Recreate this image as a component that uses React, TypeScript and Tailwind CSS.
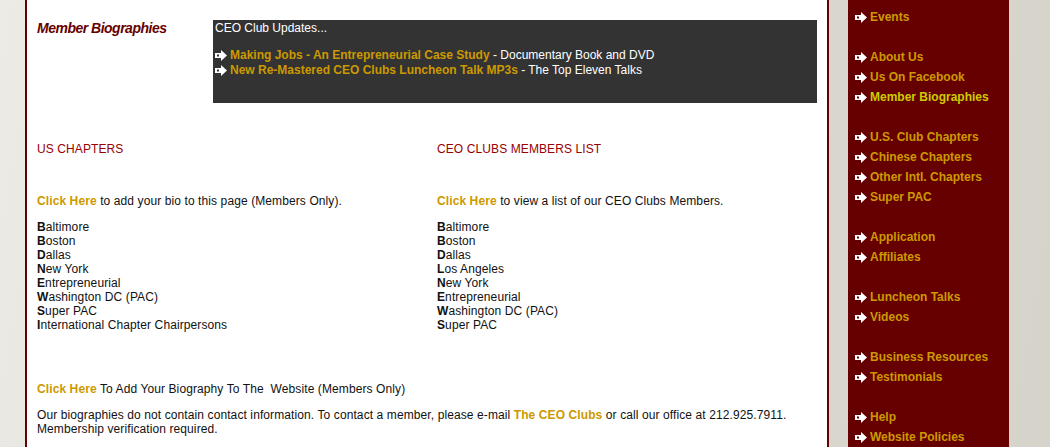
import React from 'react'

const Arrow = ({ dot = '#660000' }: { dot?: string }) => (
  <svg width="12" height="11" viewBox="0 0 12 11" className="shrink-0">
    <path d="M0 3H6V0L12 5.5L6 11V8H0Z" fill="#fff" />
    <rect x="2" y="4.5" width="2" height="2" fill={dot} />
  </svg>
)

const navGroups = [
  ['Events'],
  ['About Us', 'Us On Facebook', 'Member Biographies'],
  ['U.S. Club Chapters', 'Chinese Chapters', 'Other Intl. Chapters', 'Super PAC'],
  ['Application', 'Affiliates'],
  ['Luncheon Talks', 'Videos'],
  ['Business Resources', 'Testimonials'],
  ['Help', 'Website Policies'],
]

const usChapters = [
  'Baltimore',
  'Boston',
  'Dallas',
  'New York',
  'Entrepreneurial',
  'Washington DC (PAC)',
  'Super PAC',
  'International Chapter Chairpersons',
]

const memberList = [
  'Baltimore',
  'Boston',
  'Dallas',
  'Los Angeles',
  'New York',
  'Entrepreneurial',
  'Washington DC (PAC)',
  'Super PAC',
]

function CityList({ items }: { items: string[] }) {
  return (
    <ul className="mt-[12px] leading-[14px]">
      {items.map((c) => (
        <li key={c}>
          <b className="font-bold">{c[0]}</b>
          {c.slice(1)}
        </li>
      ))}
    </ul>
  )
}

export default function App() {
  return (
    <div className="flex h-[447px] overflow-hidden bg-[linear-gradient(100deg,#ecebe6_0%,#dedbd3_40%,#d6d3ca_100%)] font-['Liberation_Sans',Arial,sans-serif] text-[12px] text-[#111]">
      {/* main content */}
      <main className="ml-[25px] w-[804px] shrink-0 border-x-2 border-[#660000] bg-white px-[10px] pt-[20px] tracking-[0.1px]">
        <div className="flex">
          <h1 className="w-[176px] text-[14px] font-bold italic leading-[16px] tracking-[-0.5px] text-[#660000]">
            Member Biographies
          </h1>
          <div className="h-[83px] w-[604px] bg-[#333333] px-[2px] pt-px tracking-normal text-white">
            <p className="leading-[14px]">CEO Club Updates...</p>
            <div className="mt-[13px] leading-[15px]">
              <p className="flex items-center gap-[3px]">
                <Arrow dot="#333333" />
                <span>
                  <a className="font-bold text-[#cc9900]">Making Jobs - An Entrepreneurial Case Study</a> - Documentary Book and DVD
                </span>
              </p>
              <p className="flex items-center gap-[3px]">
                <Arrow dot="#333333" />
                <span>
                  <a className="font-bold text-[#cc9900]">New Re-Mastered CEO Clubs Luncheon Talk MP3s</a> - The Top Eleven Talks
                </span>
              </p>
            </div>
          </div>
        </div>

        <div className="mt-[39px] grid grid-cols-[400px_380px] leading-[14px]">
          <div>
            <h2 className="text-[#990000]">US CHAPTERS</h2>
            <p className="mt-[38px]">
              <a className="font-bold text-[#cc9900]">Click Here</a> to add your bio to this page (Members Only).
            </p>
            <CityList items={usChapters} />
          </div>
          <div>
            <h2 className="text-[#990000]">CEO CLUBS MEMBERS LIST</h2>
            <p className="mt-[38px]">
              <a className="font-bold text-[#cc9900]">Click Here</a> to view a list of our CEO Clubs Members.
            </p>
            <CityList items={memberList} />
          </div>
        </div>

        <p className="mt-[50px] leading-[14px]">
          <a className="font-bold text-[#cc9900]">Click Here</a> To Add Your Biography To The&nbsp; Website (Members Only)
        </p>
        <p className="mt-[12px] leading-[14px]">
          Our biographies do not contain contact information. To contact a member, please e-mail{' '}
          <a className="font-bold text-[#cc9900]">The CEO Clubs</a> or call our office at 212.925.7911.
          <br />
          Membership verification required.
        </p>
      </main>

      {/* sidebar */}
      <nav className="ml-[19px] w-[161px] shrink-0 bg-[#660000] pl-[7px] pt-[7px]">
        {navGroups.map((group, gi) => (
          <div key={gi} className={gi > 0 ? 'mt-[20px]' : ''}>
            {group.map((item) => (
              <div key={item} className="flex h-[20px] items-center gap-[3px]">
                <Arrow />
                <span
                  className={`font-bold ${item === 'Member Biographies' ? 'text-[#cccc00]' : 'text-[#cc9900]'}`}
                >
                  {item}
                </span>
              </div>
            ))}
          </div>
        ))}
      </nav>
    </div>
  )
}
